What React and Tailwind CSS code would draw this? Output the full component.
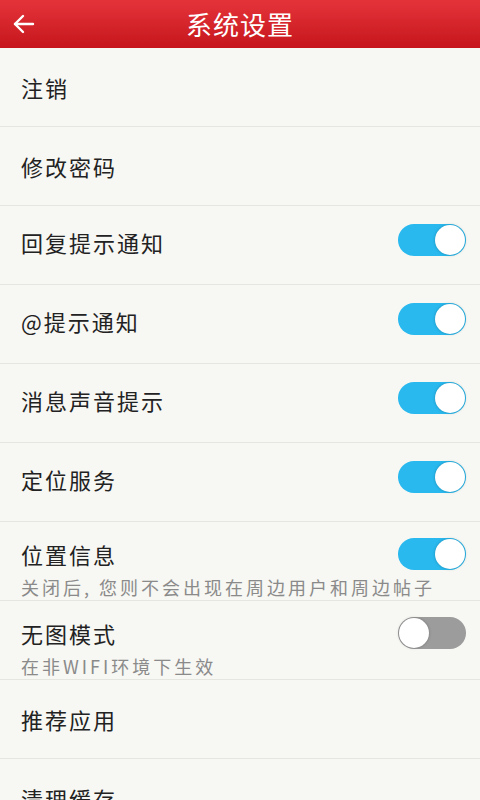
import { useState } from 'react';

const FONT = { fontFamily: '"Noto Sans CJK SC", "Noto Sans", sans-serif' };

function Toggle({ on, onChange }) {
  return (
    <button
      type="button"
      onClick={onChange}
      className={`relative w-[68px] h-[32px] rounded-full flex-shrink-0 ${on ? 'bg-[#29b9ee]' : 'bg-[#9c9c9c]'}`}
    >
      <span
        className={`absolute top-[1px] w-[30px] h-[30px] rounded-full bg-white shadow-[0_0_3px_rgba(0,0,0,0.25)] ${on ? 'right-[1px]' : 'left-[1px]'}`}
      />
    </button>
  );
}

function Row({ label, sub, toggle, on, onToggle }) {
  if (sub) {
    return (
      <div className="h-[79px] flex flex-col pl-[21px] pr-[14px] pt-[16px] border-b border-[#e6e6e1] flex-shrink-0">
        <div className="h-[32px] flex items-center justify-between">
          <span className="text-[22px] leading-[30px] tracking-[2px] text-[#222]">{label}</span>
          <Toggle on={on} onChange={onToggle} />
        </div>
        <span className="text-[18px] leading-[24px] tracking-[3px] text-[#8a8a8a] mt-[5px] whitespace-nowrap">{sub}</span>
      </div>
    );
  }
  return (
    <div className="h-[79px] flex items-center justify-between pl-[21px] pr-[14px] border-b border-[#e6e6e1] flex-shrink-0">
      <span className={`text-[22px] leading-[30px] tracking-[2px] text-[#222] ${toggle ? 'pb-[6px]' : ''}`}>{label}</span>
      {toggle && (
        <div className="pb-[6px]">
          <Toggle on={on} onChange={onToggle} />
        </div>
      )}
    </div>
  );
}

export default function App() {
  const [state, setState] = useState({
    reply: true,
    at: true,
    sound: true,
    loc: true,
    pos: true,
    noimg: false,
  });
  const flip = k => setState(s => ({ ...s, [k]: !s[k] }));

  return (
    <div className="w-[480px] h-[800px] overflow-hidden bg-[#f7f7f3] flex flex-col" style={FONT}>
      <div className="h-[48px] flex-shrink-0 relative flex items-center justify-center bg-gradient-to-b from-[#e5333a] to-[#c6151c]">
        <button type="button" className="absolute left-[12px] top-[12px] text-white">
          <svg width="24" height="24" viewBox="0 0 24 24" fill="none" stroke="currentColor" strokeWidth="2.4" strokeLinecap="round" strokeLinejoin="round">
            <line x1="21" y1="12" x2="3" y2="12" />
            <polyline points="11 4 3 12 11 20" />
          </svg>
        </button>
        <span className="text-white text-[26px] leading-none tracking-[1px]">系统设置</span>
      </div>
      <div className="flex flex-col">
        <Row label="注销" />
        <Row label="修改密码" />
        <Row label="回复提示通知" toggle on={state.reply} onToggle={() => flip('reply')} />
        <Row label="@提示通知" toggle on={state.at} onToggle={() => flip('at')} />
        <Row label="消息声音提示" toggle on={state.sound} onToggle={() => flip('sound')} />
        <Row label="定位服务" toggle on={state.loc} onToggle={() => flip('loc')} />
        <Row label="位置信息" sub="关闭后, 您则不会出现在周边用户和周边帖子" toggle on={state.pos} onToggle={() => flip('pos')} />
        <Row label="无图模式" sub="在非WIFI环境下生效" toggle on={state.noimg} onToggle={() => flip('noimg')} />
        <Row label="推荐应用" />
        <Row label="清理缓存" />
      </div>
    </div>
  );
}
